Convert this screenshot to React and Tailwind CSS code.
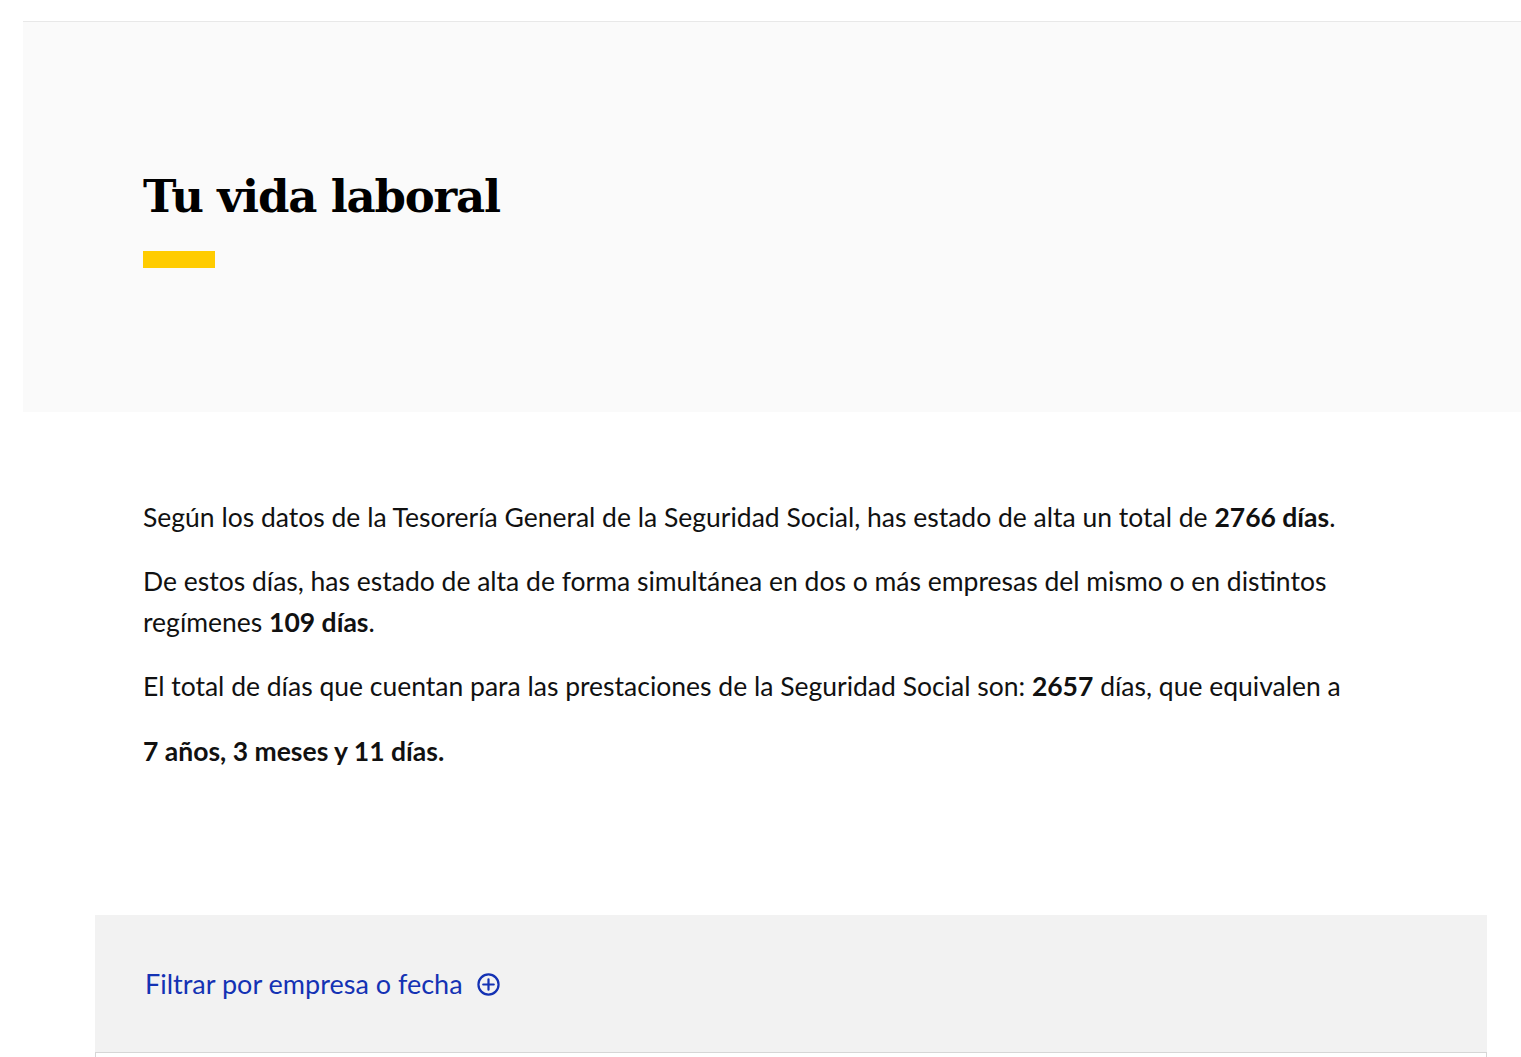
export default function App() {
  return (
    <div className="min-h-screen bg-white pt-[21px]" style={{ fontFamily: 'Lato, "Open Sans", sans-serif' }}>
      <header className="ml-[23px] h-[391px] border-t border-[#e8e8e8] bg-[#fafafa] pl-[120px] pt-[145px]">
        <h1 className="text-[45px] font-bold leading-[60px] tracking-[-1.2px] text-black" style={{ fontFamily: '"DejaVu Serif", serif' }}>
          Tu vida laboral
        </h1>
        <div className="mt-[24px] h-[17px] w-[72px] bg-[#ffcc00]" />
      </header>

      <section className="w-[1360px] pl-[143px] pt-[85px] text-[26.5px] leading-[41px] text-[#111]">
        <p className="mb-[23px]">
          Según los datos de la Tesorería General de la Seguridad Social, has estado de alta un total de <b>2766 días</b>.
        </p>
        <p className="mb-[23px]">
          De estos días, has estado de alta de forma simultánea en dos o más empresas del mismo o en distintos regímenes <b>109 días</b>.
        </p>
        <p className="mb-[24px]">
          El total de días que cuentan para las prestaciones de la Seguridad Social son: <b>2657</b> días, que equivalen a
        </p>
        <p>
          <b>7 años, 3 meses y 11 días.</b>
        </p>
      </section>

      <div className="ml-[95px] mt-[143px] w-[1392px]">
        <div className="flex h-[137px] items-center bg-[#f2f2f2] pl-[50px] pt-[2px]">
          <button className="flex items-center gap-[14px] text-[27px] text-[#1432b4]">
            <span>Filtrar por empresa o fecha</span>
            <svg width="23" height="23" viewBox="0 0 24 24" fill="none" stroke="currentColor" strokeWidth="2.3" strokeLinecap="round">
              <circle cx="12" cy="12" r="10.5" />
              <path d="M12 6.5v11M6.5 12h11" />
            </svg>
          </button>
        </div>
        <div className="h-[20px] border-x border-t border-[#d6d6d6] bg-white" />
      </div>
    </div>
  );
}
